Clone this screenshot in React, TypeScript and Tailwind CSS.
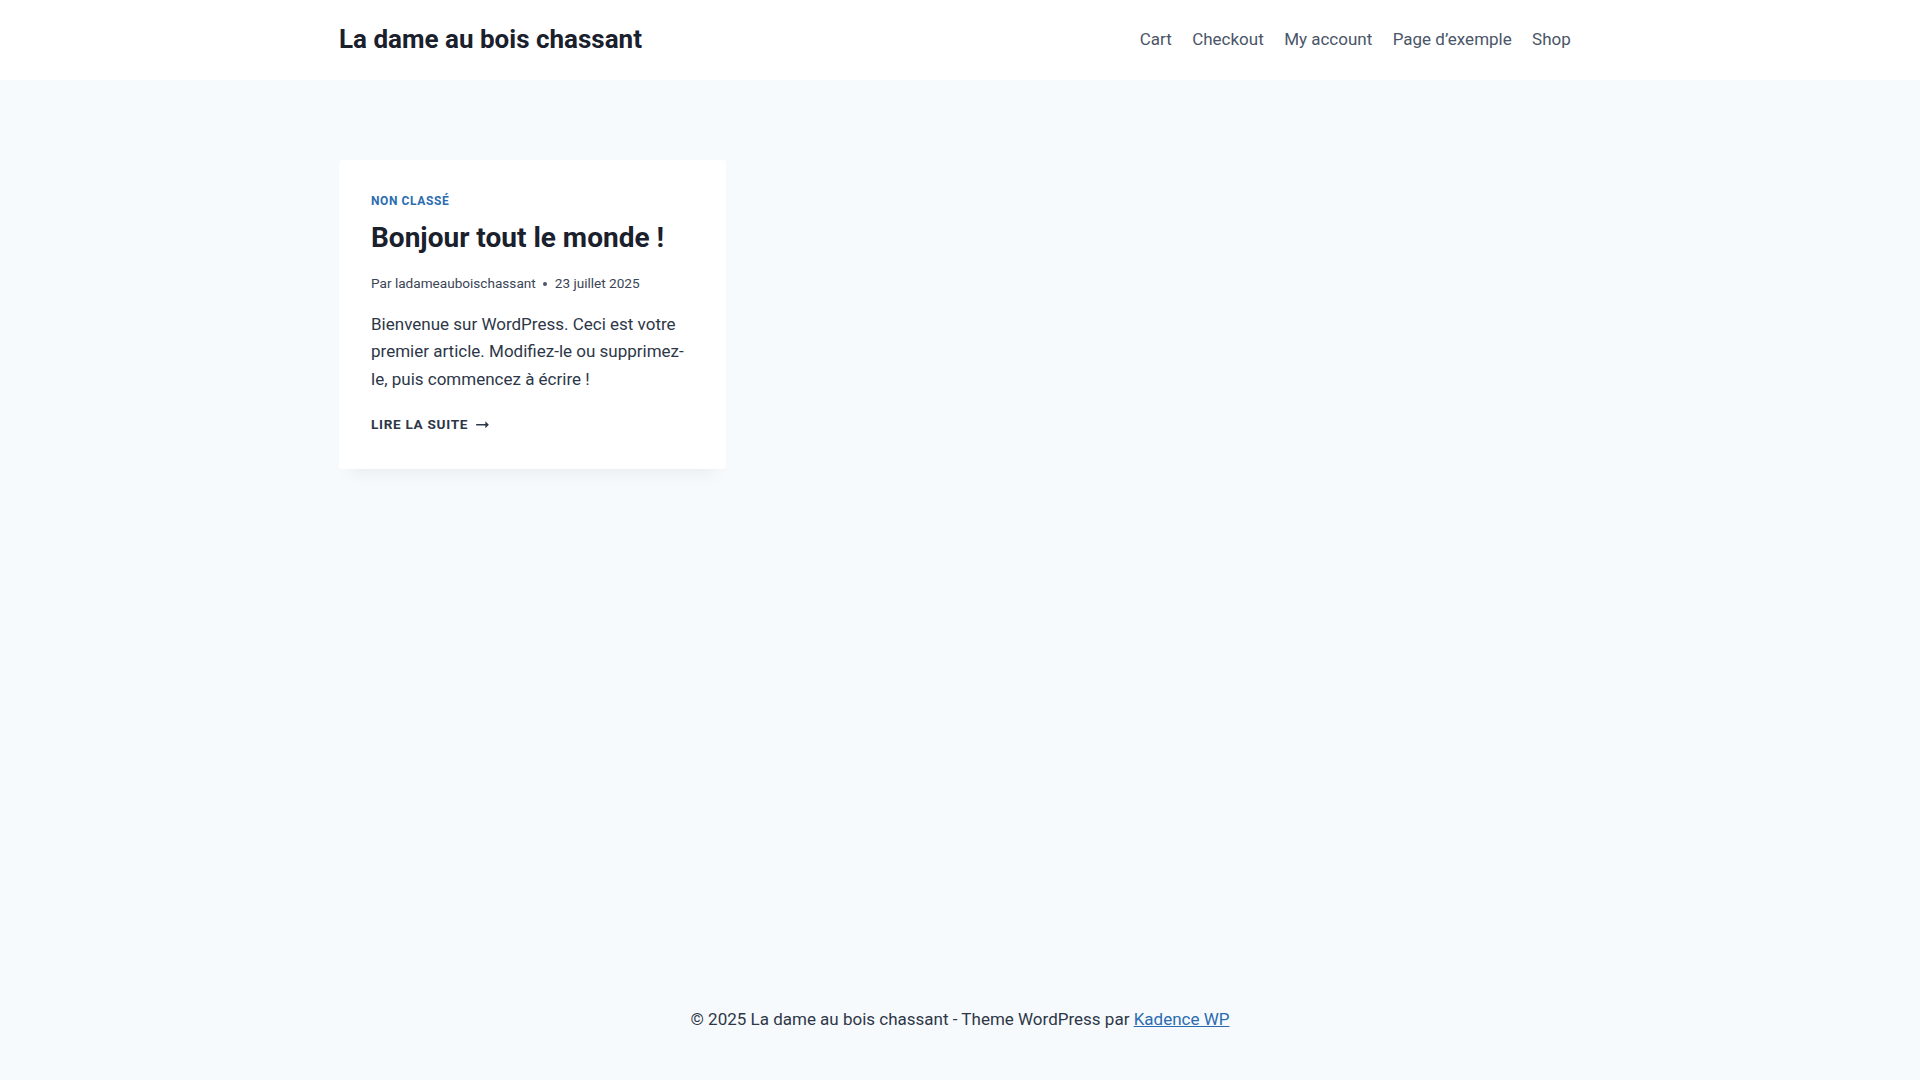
const navItems = ['Cart', 'Checkout', 'My account', 'Page d’exemple', 'Shop']

function ArrowRight() {
  return (
    <svg viewBox="0 0 27 16" className="ml-[8px] h-[7.5px] w-[13px] fill-current" aria-hidden="true">
      <path d="M0 6.6h19.6V0.5L27 8l-7.4 7.5V9.4H0z" />
    </svg>
  )
}

export default function App() {
  return (
    <div className="flex min-h-screen flex-col bg-[#f7fafc] font-['Roboto','Liberation_Sans',sans-serif] text-[17px] leading-[1.6] text-[#2d3748]">
      {/* Header */}
      <header className="bg-white">
        <div className="mx-auto flex h-[80px] max-w-[1290px] items-center justify-between px-6">
          <div className="text-[26px] font-bold leading-[1.2] text-[#1a202c]">La dame au bois chassant</div>
          <nav className="flex items-center">
            {navItems.map((item) => (
              <a key={item} href="#" className="px-[10.2px] text-[17px] text-[#4a5568]">
                {item}
              </a>
            ))}
          </nav>
        </div>
      </header>

      {/* Posts */}
      <main className="flex-1">
        <div className="mx-auto grid max-w-[1290px] grid-cols-3 gap-10 px-6 pt-20">
          <article className="rounded bg-white p-8 pb-[34px] shadow-[0px_15px_15px_-10px_rgba(0,0,0,0.05)]">
            <div className="text-[12px] font-bold uppercase leading-[1.6] tracking-[0.05em] text-[#2b6cb0]">Non classé</div>
            <h2 className="mt-[6px] text-[28px] font-bold leading-[1.5] text-[#1a202c]">Bonjour tout le monde !</h2>
            <div className="mt-[14px] flex items-center text-[13.6px] text-[#3a4556]">
              <span>Par ladameauboischassant</span>
              <span className="mx-[7.5px] h-[4px] w-[4px] rounded-full bg-[#4a5568]" />
              <span>23 juillet 2025</span>
            </div>
            <p className="mt-[16px] leading-[1.62]">
              Bienvenue sur WordPress. Ceci est votre premier article. Modifiez-le ou supprimez-le, puis commencez à écrire !
            </p>
            <a href="#" className="mt-[20px] flex items-center text-[13.6px] font-bold uppercase tracking-[0.05em] text-[#2d3748]">
              Lire la suite
              <ArrowRight />
            </a>
          </article>
        </div>
      </main>

      {/* Footer */}
      <footer className="pb-[47px] pt-[30px] text-center">
        © 2025 La dame au bois chassant - Theme WordPress par{' '}
        <a href="#" className="text-[#2b6cb0] underline">
          Kadence WP
        </a>
      </footer>
    </div>
  )
}
